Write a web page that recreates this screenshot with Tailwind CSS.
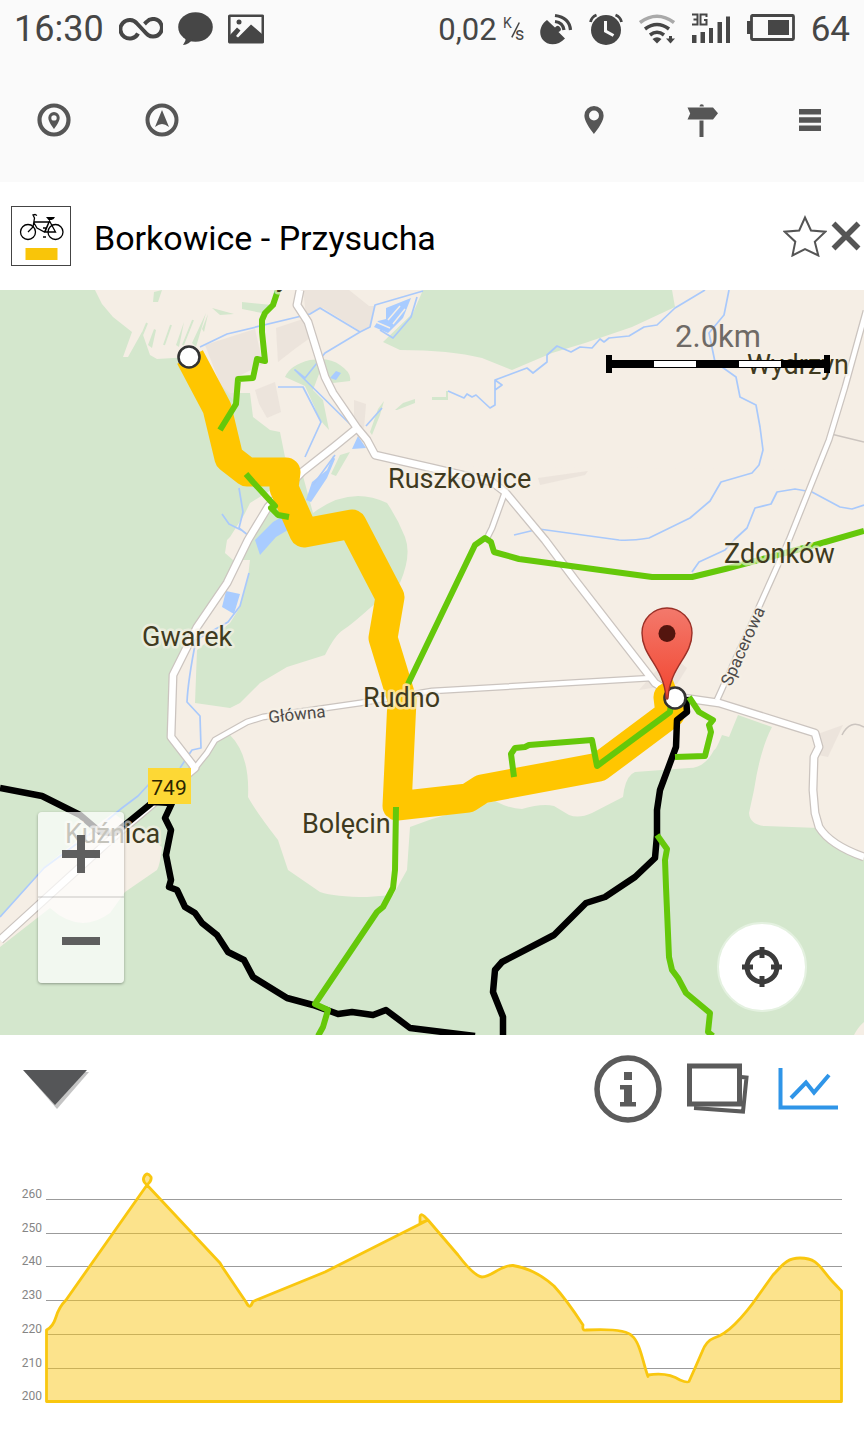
<!DOCTYPE html>
<html lang="pl">
<head>
<meta charset="utf-8">
<meta name="viewport" content="width=device-width, initial-scale=1">
<title>Borkowice - Przysucha</title>
<script src="https://cdn.jsdelivr.net/npm/@tailwindcss/browser@4"></script>
</head>
<body class="bg-white font-[Roboto,sans-serif] text-black">
<main class="flex min-h-screen flex-col">

<header class="bg-[#fafafa] text-[#464646]">
  <div class="flex h-[58px] items-center justify-between px-[14px]">
    <div class="flex items-center gap-[15px]">
      <span class="text-[36px] leading-none">16:30</span>
      <svg class="h-6 w-11" viewBox="0 0 44 24" fill="none" stroke="currentColor" stroke-width="4" aria-hidden="true"><path d="M19 16.500a9.300 9.300 0 1 1-1-10L25 14c3 3.500 5 5.600 9 5.600a8.800 8.800 0 1 0-6.500-14.600l-2 2"/></svg>
      <svg class="h-[34px] w-[35px]" viewBox="0 0 35 34" fill="currentColor" aria-hidden="true"><ellipse cx="17.500" cy="15" rx="17.300" ry="14.700"/><path d="M8 25q0 4-3 8 6-.5 10-6z"/></svg>
      <svg class="h-[30px] w-9" viewBox="0 0 36 30" aria-hidden="true"><rect x="1.300" y="1.800" width="33.500" height="26.500" rx=".5" fill="none" stroke="currentColor" stroke-width="2.600"/><circle cx="11" cy="8" r="2.500" fill="currentColor"/><path d="M2 21l7-7.500 3.500 3-4.500 5.500 2 1.500L23 10.500l11 9.500v9H2z" fill="currentColor"/></svg>
    </div>
    <div class="flex items-center gap-4">
      <div class="-mr-[3px] flex items-center gap-[6px]"><span class="text-[31px] leading-none">0,02</span>
      <svg class="h-[26px] w-[23px] overflow-visible" viewBox="0 0 23 26" fill="currentColor" aria-label="K/s"><text x="0" y="12" font-size="14">K</text><text x="12" y="24" font-size="18">s</text><path d="M16.300 6.500L8.800 21.300" stroke="currentColor" stroke-width="1.500"/></svg></div>
      <svg class="h-[34px] w-[34px]" viewBox="0 0 34 34" aria-hidden="true"><path d="M8 8Q12 12 16 15.500Q19 12 21.500 16Q23 19 19.500 20L26 26.500C19 34 9 34 4 28S1 13 8 8z" fill="currentColor"/><g fill="none" stroke="currentColor" stroke-width="3.200"><path d="M16 9.500Q24 10.500 25 18"/><path d="M16 3.500Q30.500 5.500 31.500 18"/></g></svg>
      <svg class="h-[34px] w-[34px]" viewBox="0 0 34 34" aria-hidden="true"><circle cx="17" cy="18" r="15" fill="currentColor"/><path d="M16.500 9v10l8 4.500" fill="none" stroke="#fafafa" stroke-width="3"/><path d="M1.500 10q1-5 6-7M26.500 3q5 2 6 7" fill="none" stroke="currentColor" stroke-width="2.800"/></svg>
      <svg class="h-[30px] w-9" viewBox="0 0 36 30" fill="none" stroke="currentColor" stroke-width="3.500" aria-hidden="true"><path d="M1 8.500Q18-4 35 8.500" stroke="#a9a9a9"/><path d="M6 15Q18 6 30 15"/><path d="M11 21Q18 15.500 25 21"/><path d="M13.500 25Q18 21.500 22.500 25L18 29.500z" fill="currentColor" stroke="none"/><path d="M31.500 22v4" stroke-width="3"/><path d="M27 24.500h9l-4.500 5z" fill="currentColor" stroke="none"/></svg>
      <svg class="-mt-1 h-[32px] w-10" viewBox="0 0 40 32" fill="currentColor" aria-label="3G"><path d="M1 24h4.500v8H1zM9.500 21H14v11H9.500zM18 17h4v15h-4zM26.500 11H31v21h-4.500zM35 5.500h4V32h-4z"/><path d="M1 3.500h5.500v10H1M2.500 8.500h4M15.500 6V3.500H9.500v10h6V9H13" fill="none" stroke="currentColor" stroke-width="2"/></svg>
      <svg class="-mt-1 h-[27px] w-12" viewBox="0 0 48 27" aria-hidden="true"><rect x="4.500" y="1.500" width="42" height="24" rx="1" fill="none" stroke="currentColor" stroke-width="2.800"/><path d="M0 7h4v13H0zM21 6h21v15H21z" fill="currentColor"/></svg>
      <span class="text-[35px] leading-none">64</span>
    </div>
  </div>
  <nav class="grid h-[124px] grid-cols-8 items-center text-[#565656]" aria-label="Mapa">
    <button type="button" class="flex h-full items-center justify-center" aria-label="Moja pozycja"><svg class="h-[34px] w-[34px]" viewBox="0 0 34 34"><circle cx="17" cy="17" r="14.500" fill="none" stroke="currentColor" stroke-width="4.200"/><path d="M17 9a5.700 5.700 0 0 0-5.700 5.800C11.300 19 17 26 17 26s5.700-7 5.700-11.200A5.700 5.700 0 0 0 17 9zm0 3.200a2.700 2.700 0 1 1 0 5.400 2.700 2.700 0 0 1 0-5.400z" fill="currentColor" fill-rule="evenodd"/></svg></button>
    <button type="button" class="flex h-full items-center justify-center" aria-label="Nawiguj"><svg class="h-[34px] w-[34px]" viewBox="0 0 34 34"><circle cx="17" cy="17" r="14.500" fill="none" stroke="currentColor" stroke-width="4"/><path d="M17 7l7 17q-4-3-7-3t-7 3z" fill="currentColor"/></svg></button>
    <button type="button" class="col-start-6 flex h-full items-center justify-center" aria-label="Miejsca"><svg class="h-7 w-5" viewBox="0 0 20 28"><path d="M10 0A9.600 9.600 0 0 0 .4 9.600C.4 17 10 28 10 28s9.600-11 9.600-18.400A9.600 9.600 0 0 0 10 0zm0 4.500a5 5 0 1 1 0 10 5 5 0 0 1 0-10z" fill="currentColor" fill-rule="evenodd"/></svg></button>
    <button type="button" class="flex h-full items-center justify-center" aria-label="Szlaki"><svg class="h-[34px] w-[31px]" viewBox="0 0 31 34" fill="currentColor"><path d="M12.500 3.500a2.200 2.200 0 1 1 4.400 0zM.5 4.500H26l5 5.800-5 6.200H.5L3.200 10.500zM12.500 17.500h4V34h-4z"/></svg></button>
    <button type="button" class="flex h-full items-center justify-center" aria-label="Menu"><svg class="h-[22px] w-[22px]" viewBox="0 0 22 22" fill="currentColor"><path d="M0 0h22v5.500H0zM0 8.300h22v5.500H0zM0 16.500h22V22H0z"/></svg></button>
  </nav>
</header>

<section class="flex h-[108px] items-center pl-[11px]">
  <svg class="h-[60px] w-[60px] shrink-0" viewBox="0 0 60 60" aria-hidden="true"><rect x=".5" y=".5" width="59" height="59" fill="#fff" stroke="#444"/><g fill="none" stroke="#000" stroke-width="1.300"><circle cx="17" cy="26" r="7.500"/><circle cx="44.500" cy="26" r="7.500"/><path d="M26 9.500l-2-1-2 .5 1.500 3L23 15l-1 6-5 5M23 16h15M23 17l3 5 7.500 4L38.500 15l6 11H34l4.500-11M32 31h3M32 22h3"/></g><path d="M35 11h9q-1 2.500-3.500 3h-3z"/><rect x="14.500" y="42" width="32" height="12" fill="#f9c509"/></svg>
  <h1 class="mt-[3px] ml-[23px] flex-1 text-[34px] leading-[44px] font-normal">Borkowice - Przysucha</h1>
  <button type="button" class="flex h-full items-center" aria-label="Dodaj do ulubionych"><svg class="h-[42px] w-11" viewBox="0 0 44 42" fill="none" stroke="#555" stroke-width="2"><path d="M22 2.500l6 13 14.300 1.200-10.500 10 3.500 13.800L22 34l-12.500 6.500 2.800-13.800-10.600-10 14.500-1.200z"/></svg></button>
  <button type="button" class="flex h-full items-center pr-[3px] pl-[4px]" aria-label="Zamknij"><svg class="h-[30px] w-[30px]" viewBox="0 0 30 30" stroke="#555" stroke-width="5.500"><path d="M2.500 2.500l25 25M27.500 2.500l-25 25"/></svg></button>
</section>

<section class="relative h-[745px] overflow-hidden" aria-label="Mapa trasy">
  <svg class="h-full w-full" viewBox="0 290 864 745" preserveAspectRatio="xMidYMid slice" role="img" aria-label="Mapa trasy Borkowice - Przysucha">
    <rect y="290" width="864" height="745" fill="#d4e7cd"/>
    <!-- open land -->
    <g fill="#f5eee5">
      <path d="M95 290L102 304 113 317 132 332 123 357 128 357 142 332 150 355 157 359 190 357 230 393 250 393 253 417 270 430 280 432 285 457 300 475 864 485V290z"/>
      <path d="M300 465L268 492 250 503 244 515 230 537 227 540 225 553 233 560 250 560 248 577 240 607 230 623 197 650 195 703 230 708 240 703 260 683 287 667 325 655Q335 635 343 630T370 608L400 583Q412 555 405 537T387 503Q350 485 313 513L300 465 864 470 864 860Q835 845 819 828L765 826Q750 825 749 813L754 790Q760 750 772 727L738 715 729 737 722 735Q716 750 714 750 705 768 689 768L635 772Q627 775 624 790L623 797 592 813Q579 819 569 815L554 806Q542 803 522 809 510 809 495 801L432 819 410 827 407 870 393 895 367 897Q335 897 320 892L288 870 278 840Q255 810 248 797 250 755 230 735L213 742 200 767 195 768 171 737 173 675 197 627 227 583 268 507z"/>
      <path d="M0 917L43 868 80 838 113 813 162 847Q160 865 157 870L125 892 110 913Q80 935 50 908L0 947z"/>
      <path d="M864 1022q-6 5-10 13h10z"/>
    </g>
    <!-- woods inside open land -->
    <g fill="#d4e7cd">
      <path d="M423 290H672L675 307 632 327 585 343 552 353 512 370 482 358Q450 350 400 350L383 342 413 313z"/>
      <path d="M154 292l8-2-4 12h-5zM242 302l30 3-10 8-20-4zM202 329l6-15-4 18zM192 343l14-30-10 34zM212 308l22 6-14 1zM285 377q5-12 25-17 20-3 30 5 12 8 10 16l-17 2-14-9-6 16 10 10 6 30q-12-12-14-22l-10-22z"/>
      <path d="M370 432l8-23 6-8-4 14-8 20zM395 410l8-7 12-4v4l-18 7zM432 397h14v-6h2v9h-16zM340 455l10-3-14 24-5-2zM148 345l6-16 2 1-4 18zM176 345l8-23-5 25z"/>
    </g>
    <path d="M133 357l14-34M164 345l7-20M183 345l10-25" stroke="#d4e7cd" stroke-width="2"/>
    <!-- built-up areas -->
    <g fill="#eae1d9" opacity=".8"><path d="M303 290h46l20 16h6l-6 22-9 3-37-23-17 7zM276 328l30-10 4 20-14 10-18 14zM205 345l50-16 8 35-24 12-4 26-14-16zM255 390l20-8 6 30-14 6-8-14zM354 400l12 4-2 24-10-6zM538 478l50-7-3 4-45 10zM655 672l20-14 12 10-10 16-38 6zM815 735l28-10-15 32-10-2z"/></g>
    <!-- water -->
    <g fill="#a9ccff">
      <path d="M386 308l25-10-8 20-15 15-14-6 4-6 8-2zM255 540l18-18 12-7 13 9-22 13-16 18zM306 500l6-18 15-12 6-14 2 3-8 19-16 24zM352 449l6-13 8 12zM330 378l6-7 5 2-5 7zM226 591l14 3-6 20-12-7z"/>
    </g>
    <path d="M388 320l12-14M393 324l12-15M376 322l14 6" stroke="#f5eee5" stroke-width="1.500"/>
    <g fill="none" stroke="#a9c9fb" stroke-width="1.700" stroke-linejoin="round">
      <path d="M200 347L227 334 310 314 320 308 360 332 325 353 305 378 295 370 353 427M278 387L303 387 321 422 305 457M360 332L370 327 375 305 423 291M417 297L411 317 393 338 380 330M366 426l16-18M335 455l-22 30M239 488l4 24-4 16 10 8M222 514l7 10 12 6"/>
      <path d="M705 290L675 308 657 325 644 327 629 336 609 338 604 342 600 339 592 348 580 347 571 352 557 346 547 355 547 362 533 373 527 368 495 380 495 405 490 408 476 395 472 397 467 394 464 398 448 391M495 380l7 5-7 5"/>
      <path d="M729 290L724 315 709 333 715 362 736 377 740 397 756 405 760 427 763 450 759 465 752 473 721 482 710 501 690 518 649 538Q630 541 619 540L539 529 514 535M864 505L852 509 840 507 812 492 795 489 777 492 771 504 755 508 747 528 735 539 725 550 699 562 692 572"/>
      <path d="M249 573L240 606 228 622 196 640Q188 680 187 702L200 716 201 748 192 750 180 768M150 783L138 796 122 808 98 828 44 868 0 917"/>
    </g>
    <!-- roads -->
    <g fill="none" stroke-linejoin="round">
      <g stroke="#cbc4bf">
        <path stroke-width="9" d="M300 290L297 305 308 322 325 377 333 393 357 428 367 440 375 455 432 468 492 482 505 492 545 540 575 580 655 683 677 697 719 703 815 733 819 747 814 757 813 790 815 813 819 827Q830 845 864 857M357 428L335 446 302 472 268 507 248 540 227 583 197 627 173 675 171 737 195 768 110 840 0 940"/>
        <path stroke-width="7" d="M195 768L207 753 215 740 247 722 263 717 360 703 432 691 652 678M505 492L492 528 487 538M866 311L845 387 829 440 809 490 789 540 759 607 717 700"/>
        <path stroke-width="1.500" d="M831 434l33 8M842 735q8-16 22-8M432 467l30 6"/>
      </g>
      <g stroke="#fff">
        <path stroke-width="6.500" d="M300 290L297 305 308 322 325 377 333 393 357 428 367 440 375 455 432 468 492 482 505 492 545 540 575 580 655 683 677 697 719 703 815 733 819 747 814 757 813 790 815 813 819 827Q830 845 864 857M357 428L335 446 302 472 268 507 248 540 227 583 197 627 173 675 171 737 195 768 110 840 0 940"/>
        <path stroke-width="4.500" d="M195 768L207 753 215 740 247 722 263 717 360 703 432 691 652 678M505 492L492 528 487 538M866 311L845 387 829 440 809 490 789 540 759 607 717 700"/>
      </g>
    </g>
    <!-- trails -->
    <g fill="none">
      <path stroke="#ffc600" stroke-width="29" stroke-linejoin="round" d="M190 357L217 408 229 458 247 472 286 472 284 488 304 533 352 524 390 597 383 638 402 700 397 806 468 798 482 789 599 767 670 714 668 697 678 693"/>
      <g stroke="#000" stroke-width="6.500" stroke-linejoin="round">
        <path d="M0 788L42 796 80 815 100 832 115 833 153 802 172 803 165 818 171 830 166 855 171 880 169 887 177 890 185 907 195 913 202 923 217 935 228 952 244 960 253 977 287 998 313 1005 338 1014 352 1012 373 1015 386 1010 410 1028 475 1036"/>
        <path d="M686 697L687 712 677 720 676 747 660 790 657 810 657 835 655 858 635 877 605 897 586 903 554 935 502 962 495 970 493 992 503 1017 503 1035"/>
      </g>
      <g stroke="#65c80a" stroke-width="6" stroke-linejoin="round">
        <path d="M278 290L273 305 265 313 262 320 262 332 265 361 257 359 253 378 238 379 236 404 220 430M246 474L253 482 275 506 271 508 278 515 289 517"/>
        <path d="M408 684L475 545 485 538 491 542 494 552 519 559 652 577 692 577 725 569 815 545 864 531"/>
        <path d="M514 777L511 754 515 748 525 747 529 745 592 740 597 766 670 712 671 702M689 697L699 712 713 720 709 725 711 732 705 756 675 757"/>
        <path d="M396 807L395 870 393 888 383 907 377 912 315 1004 328 1010 323 1027 318 1036M657 835L667 849 665 860 666 887 669 957 672 970 678 978 686 993 710 1013 708 1032 713 1036"/>
      </g>
    </g>
    <circle cx="189" cy="357" r="10.500" fill="#fff" stroke="#333" stroke-width="2.600"/>
    <!-- place names -->
    <g fill="#3f3a20" stroke="#f7f2e8" stroke-opacity=".65" stroke-width="5" stroke-linejoin="round" paint-order="stroke" font-size="27">
      <text x="276" y="286">y</text>
      <text x="388" y="488">Ruszkowice</text>
      <text x="724" y="563">Zdonków</text>
      <text x="142" y="646">Gwarek</text>
      <text x="363" y="707">Rudno</text>
      <text x="302" y="833">Bolęcin</text>
      <text x="65" y="843">Kuźnica</text>
      <text x="747" y="374">Wydrzyn</text>
      <g font-size="17" fill="#4d4a48"><text transform="translate(269 723) rotate(-6)">Główna</text><text transform="translate(731 687) rotate(-66)">Spacerowa</text></g>
    </g>
    <rect x="148" y="768" width="43" height="36" fill="#fdd835"/>
    <text x="169" y="795" font-size="21" text-anchor="middle" fill="#2b2500">749</text>
    <!-- destination pin -->
    <defs><linearGradient id="pin" x1="0" y1="0" x2="0" y2="1"><stop offset="0" stop-color="#f3796c"/><stop offset="1" stop-color="#f2452f"/></linearGradient></defs>
    <circle cx="675" cy="698" r="10.500" fill="#fff" stroke="#333" stroke-width="2.600"/>
    <path d="M667 608a25 25 0 0 0-25 25c0 24 22 33 24 65 .5 1.500 1.500 1.500 2 0 2-32 24-41 24-65a25 25 0 0 0-25-25z" fill="url(#pin)" stroke="#9b3027" stroke-width="1.400"/>
    <circle cx="667" cy="633.500" r="8.500" fill="#54150e"/>
  </svg>

  <div class="absolute top-[28px] right-[34px] flex w-[224px] flex-col items-center">
    <span class="text-[31px] leading-[37px] text-[#6f6a66]">2.0km</span>
    <svg class="h-[18px] w-full" viewBox="0 0 224 18" aria-hidden="true"><path d="M0 0h6v18H0zM218 0h6v18h-6zM3 5h218v8H3z"/><path d="M48 6h42v6H48zM133 6h42v6h-42z" fill="#fff"/></svg>
  </div>

  <div class="absolute top-[522px] left-[38px] flex w-[86px] flex-col divide-y-2 divide-black/10 rounded-sm bg-white/70 text-[#5f5f5f] shadow-[0_1px_3px_rgba(0,0,0,0.35)]">
    <button type="button" class="flex h-[86px] items-center justify-center" aria-label="Przybliż"><svg class="h-[38px] w-[38px]" viewBox="0 0 38 38" fill="currentColor"><path d="M0 15h15V0h8v15h15v8H23v15h-8V23H0z"/></svg></button>
    <button type="button" class="flex h-[85px] items-center justify-center" aria-label="Oddal"><svg class="h-2 w-[38px]" viewBox="0 0 38 8" fill="currentColor"><path d="M0 0h38v8H0z"/></svg></button>
  </div>

  <button type="button" class="absolute right-[57px] bottom-[23px] flex h-[90px] w-[90px] items-center justify-center rounded-full border-2 border-[#e4f1e0] bg-white" aria-label="Wyśrodkuj mapę"><svg class="h-10 w-10" viewBox="0 0 40 40" fill="none" stroke="#3b3b3b" stroke-width="5"><circle cx="20" cy="20" r="15"/><path d="M20 0v11M20 29v11M0 20h11M29 20h11"/></svg></button>
</section>

<section class="flex h-[107px] items-center justify-between pr-[11px] pl-[22px] text-[#5b5b5b]">
  <button type="button" class="flex h-full items-center" aria-label="Zwiń panel"><svg class="h-10 w-[68px]" viewBox="0 0 68 40"><path d="M3 3h64L35 40z" fill="#c4c4c4"/><path d="M1 1h64L33 36z" fill="#555658"/></svg></button>
  <div class="flex h-full">
    <button type="button" class="flex w-[90px] items-center justify-center" aria-label="Informacje"><svg class="h-[68px] w-[68px]" viewBox="0 0 68 68" fill="currentColor"><circle cx="34" cy="34" r="31" fill="none" stroke="currentColor" stroke-width="5.500"/><path d="M30 17h8v8h-8zM26 30h12v17h4v4.500H26V47h4V34.500h-4z"/></svg></button>
    <button type="button" class="flex w-[90px] items-center justify-center" aria-label="Zdjęcia"><svg class="h-[52px] w-[62px]" viewBox="0 0 62 52" fill="none" stroke="currentColor"><rect x="2.500" y="3" width="50" height="38" stroke-width="5"/><path d="M54 14l5.500.5L56 48.500 7 45" stroke-width="4"/></svg></button>
    <button type="button" class="flex w-[90px] items-center justify-center text-[#2f95e8]" aria-label="Profil wysokości"><svg class="h-11 w-[60px]" viewBox="0 0 60 44" fill="none" stroke="currentColor" stroke-width="4"><path d="M2.500 1v39.500H60"/><path d="M13 31L28 15.500l8 10L51 8"/></svg></button>
  </div>
</section>

<section aria-label="Profil wysokości">
  <svg class="block w-full" viewBox="0 1142 864 298" role="img" aria-label="Wykres wysokości trasy">
    <path d="M46 1199.500H842M46 1233.500H842M46 1266.500H842M46 1300.500H842M46 1334.500H842M46 1368.500H842M46 1401.500H842" stroke="#9b9b9b"/>
    <path d="M46.500 1330Q53 1327 56 1317T66 1300L147 1185Q142 1181 144 1177 147 1171 151 1177 152 1181 147 1185L220 1263 223 1268 246 1302Q249 1308 251 1305.500L253 1301.500 325 1272 428 1220 427 1219 424 1216Q420 1213 420 1217V1223L428 1220 458 1255Q474 1276 482 1277C492 1277 500 1265 513 1265.500Q535 1269 554 1286 566 1299 583 1325 582 1331 586 1330 626 1328 632 1336C640 1342 643 1363 648 1376.500V1375Q668 1372 680 1380 687 1383 689 1381.500 696 1366 702 1352 706 1341 714 1338 724 1335 735 1324 747 1312 758 1296L773 1275C782 1266 786 1258 800 1258 818 1258 820 1268 832 1281L841.500 1291V1401.500H46.500z" fill="#f9c81a" fill-opacity=".5" stroke="#f9c70f" stroke-width="2.800" stroke-linejoin="round"/>
    <g font-size="12" fill="#858585" text-anchor="end"><text x="42" y="1198">260</text><text x="42" y="1232">250</text><text x="42" y="1265">240</text><text x="42" y="1299">230</text><text x="42" y="1333">220</text><text x="42" y="1367">210</text><text x="42" y="1400">200</text></g>
  </svg>
</section>
</main>
</body>
</html>
